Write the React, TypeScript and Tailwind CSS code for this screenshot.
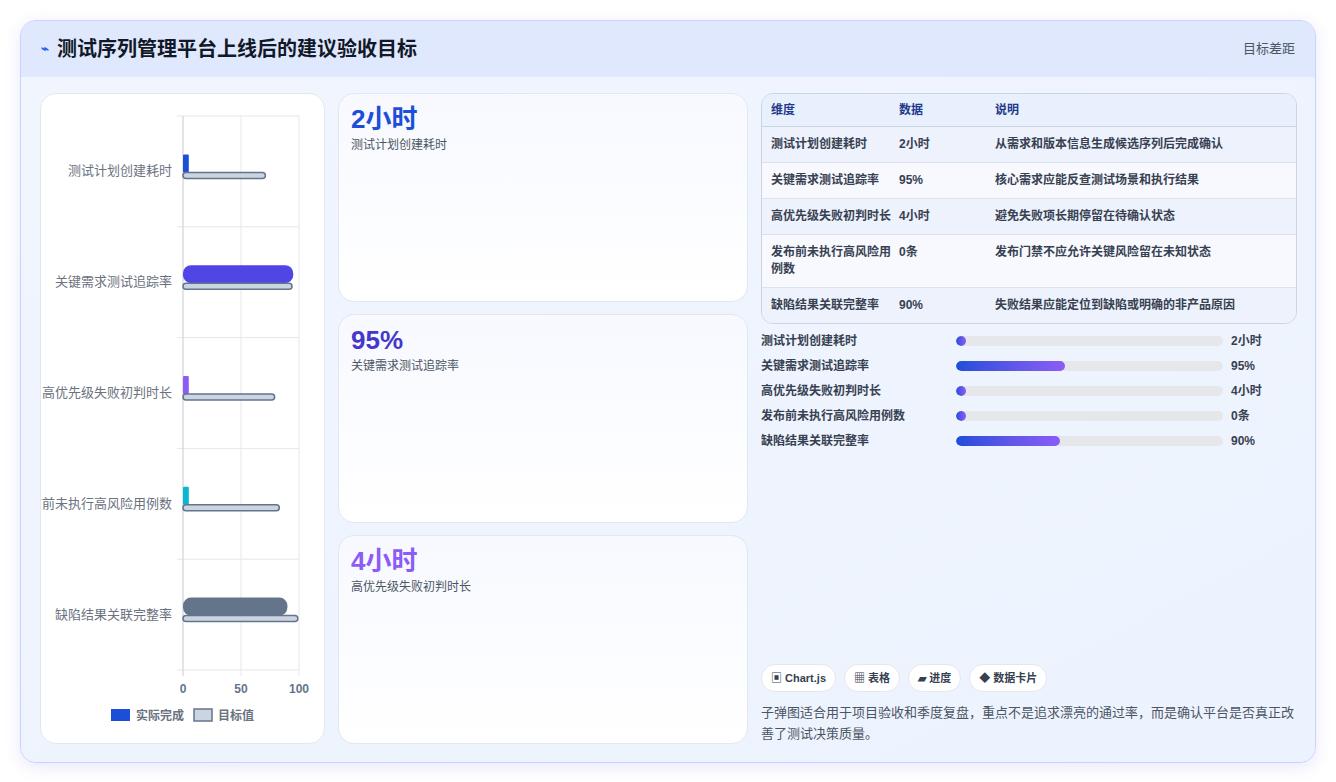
import React from "react";

const font = { fontFamily: '"Liberation Sans","Noto Sans CJK SC",sans-serif' };

const rows = [
  { name: "测试计划创建耗时", v: "2小时", d: "从需求和版本信息生成候选序列后完成确认", p: 2 },
  { name: "关键需求测试追踪率", v: "95%", d: "核心需求应能反查测试场景和执行结果", p: 41 },
  { name: "高优先级失败初判时长", v: "4小时", d: "避免失败项长期停留在待确认状态", p: 2 },
  { name: "发布前未执行高风险用例数", v: "0条", d: "发布门禁不应允许关键风险留在未知状态", p: 2 },
  { name: "缺陷结果关联完整率", v: "90%", d: "失败结果应能定位到缺陷或明确的非产品原因", p: 39 },
];

function Chart() {
  const x0 = 142, x1 = 258, top = 22, band = 110.8;
  const sx = (v: number) => x0 + ((x1 - x0) * v) / 100;
  const bars = [
    { a: 5, t: 71, c: "#1d4ed8" },
    { a: 95, t: 94, c: "#4f46e5" },
    { a: 5, t: 79, c: "#8b5cf6" },
    { a: 5, t: 83, c: "#06b6d4" },
    { a: 90, t: 99, c: "#64748b" },
  ];
  return (
    <svg width="284" height="650" style={font}>
      {[0, 50, 100].map((v) => (
        <line key={v} x1={sx(v)} x2={sx(v)} y1={top} y2={top + band * 5 + 6} stroke="#e5e7eb" />
      ))}
      {[0, 1, 2, 3, 4, 5].map((i) => (
        <line key={i} x1={x0 - 6} x2={x1} y1={top + band * i} y2={top + band * i} stroke="#e5e7eb" />
      ))}
      <line x1={x0} x2={x0} y1={top} y2={top + band * 5 + 6} stroke="#d1d5db" />
      {bars.map((b, i) => {
        const cy = top + band * i + band / 2;
        return (
          <g key={i}>
            <text x={131} y={cy + 4} textAnchor="end" fontSize="13" fill="#6b7280">{rows[i].name}</text>
            <rect x={x0} y={cy - 17} width={sx(b.a) - x0} height={18} rx={b.a > 50 ? 8 : 1} fill={b.c} />
            <rect x={x0} y={cy + 1} width={sx(b.t) - x0} height={6} rx={3} fill="#cbd5e1" stroke="#64748b" strokeWidth="1.5" />
          </g>
        );
      })}
      {[0, 50, 100].map((v) => (
        <text key={v} x={sx(v)} y={599} textAnchor="middle" fontSize="12" fontWeight="bold" fill="#64748b">{v}</text>
      ))}
      <rect x={70} y={615} width={19} height={12} fill="#1d4ed8" />
      <text x={95} y={626} fontSize="12" fontWeight="bold" fill="#6b7280">实际完成</text>
      <rect x={153} y={615} width={18} height={12} fill="#cbd5e1" stroke="#64748b" strokeWidth="1.5" />
      <text x={177} y={626} fontSize="12" fontWeight="bold" fill="#6b7280">目标值</text>
    </svg>
  );
}

const cards = [
  { v: "2小时", l: "测试计划创建耗时", c: "text-[#1d4ed8]" },
  { v: "95%", l: "关键需求测试追踪率", c: "text-[#4338ca]" },
  { v: "4小时", l: "高优先级失败初判时长", c: "text-[#8b5cf6]" },
];

export default function App() {
  return (
    <div className="w-[1336px] h-[782px] bg-white pt-5 px-5" style={font}>
      <div className="w-[1296px] h-[743px] rounded-2xl border border-[#c7d2fe] bg-[#eef4fd] overflow-hidden shadow-[0_4px_16px_rgba(99,102,241,0.15)] flex flex-col">
        <div className="h-[56px] shrink-0 bg-[#dfe8fc] flex items-center justify-between pl-5 pr-5">
          <div className="flex items-center gap-2">
            <span className="text-[#2563eb] text-[13px] font-bold">⌁</span>
            <span className="text-[20px] font-bold text-[#111827]">测试序列管理平台上线后的建议验收目标</span>
          </div>
          <span className="text-[13px] text-[#4b5563]">目标差距</span>
        </div>
        <div className="flex-1 flex gap-[13px] pl-[19px] pr-[18px] pt-[16px] pb-[18px] bg-gradient-to-br from-[#f0f5fe] to-[#edf3fe]">
          <div className="w-[285px] h-[651px] bg-white rounded-2xl border border-[#e2e8f0] overflow-hidden">
            <Chart />
          </div>
          <div className="w-[410px] flex flex-col gap-3">
            {cards.map((c) => (
              <div key={c.v} className="h-[209px] rounded-2xl border border-[#e2e8f0] bg-gradient-to-b from-[#f7f9ff] to-white px-3 pt-2">
                <div className={`text-[26px] font-bold leading-[34px] ${c.c}`}>{c.v}</div>
                <div className="text-[12px] text-[#4b5563]">{c.l}</div>
              </div>
            ))}
          </div>
          <div className="flex-1 flex flex-col">
            <div className="rounded-xl border border-[#cbd5e1] overflow-hidden text-[12px]">
              <div className="flex h-[33px] items-center bg-[#e8effd] border-b border-[#cbd5e1] text-[#1e3a8a] font-bold">
                <div className="w-[137px] pl-[9px]">维度</div>
                <div className="w-[96px]">数据</div>
                <div>说明</div>
              </div>
              {rows.map((r, i) => (
                <div key={i} className={`flex py-[9px] leading-[17px] text-[#374151] font-bold ${i % 2 ? "bg-[#f7f9ff]" : "bg-[#edf2fd]"} ${i < 4 ? "border-b border-[#dbe3f0]" : ""}`}>
                  <div className="w-[137px] pl-[9px] pr-2">{r.name}</div>
                  <div className="w-[96px]">{r.v}</div>
                  <div className="flex-1">{r.d}</div>
                </div>
              ))}
            </div>
            <div className="mt-[8px] flex flex-col gap-[7px]">
              {rows.map((r, i) => (
                <div key={i} className="flex items-center h-[18px] text-[12px] font-bold text-[#374151]">
                  <div className="w-[195px]">{r.name}</div>
                  <div className="w-[267px] h-[10px] rounded-full bg-[#e5e7eb] overflow-hidden">
                    <div className="h-full rounded-full bg-gradient-to-r from-[#1d4ed8] to-[#8b5cf6] min-w-[10px]" style={{ width: `${r.p}%` }} />
                  </div>
                  <div className="ml-2">{r.v}</div>
                </div>
              ))}
            </div>
            <div className="mt-auto">
              <div className="flex gap-2 text-[11px] font-bold text-[#374151]">
                {["▣ Chart.js", "▦ 表格", "▰ 进度", "◆ 数据卡片"].map((t) => (
                  <span key={t} className="h-[28px] px-[9px] flex items-center rounded-full bg-white border border-[#e5e7eb]">{t}</span>
                ))}
              </div>
              <p className="mt-[10px] text-[13px] leading-[21px] text-[#4b5563]">
                子弹图适合用于项目验收和季度复盘，重点不是追求漂亮的通过率，而是确认平台是否真正改善了测试决策质量。
              </p>
            </div>
          </div>
        </div>
      </div>
    </div>
  );
}
